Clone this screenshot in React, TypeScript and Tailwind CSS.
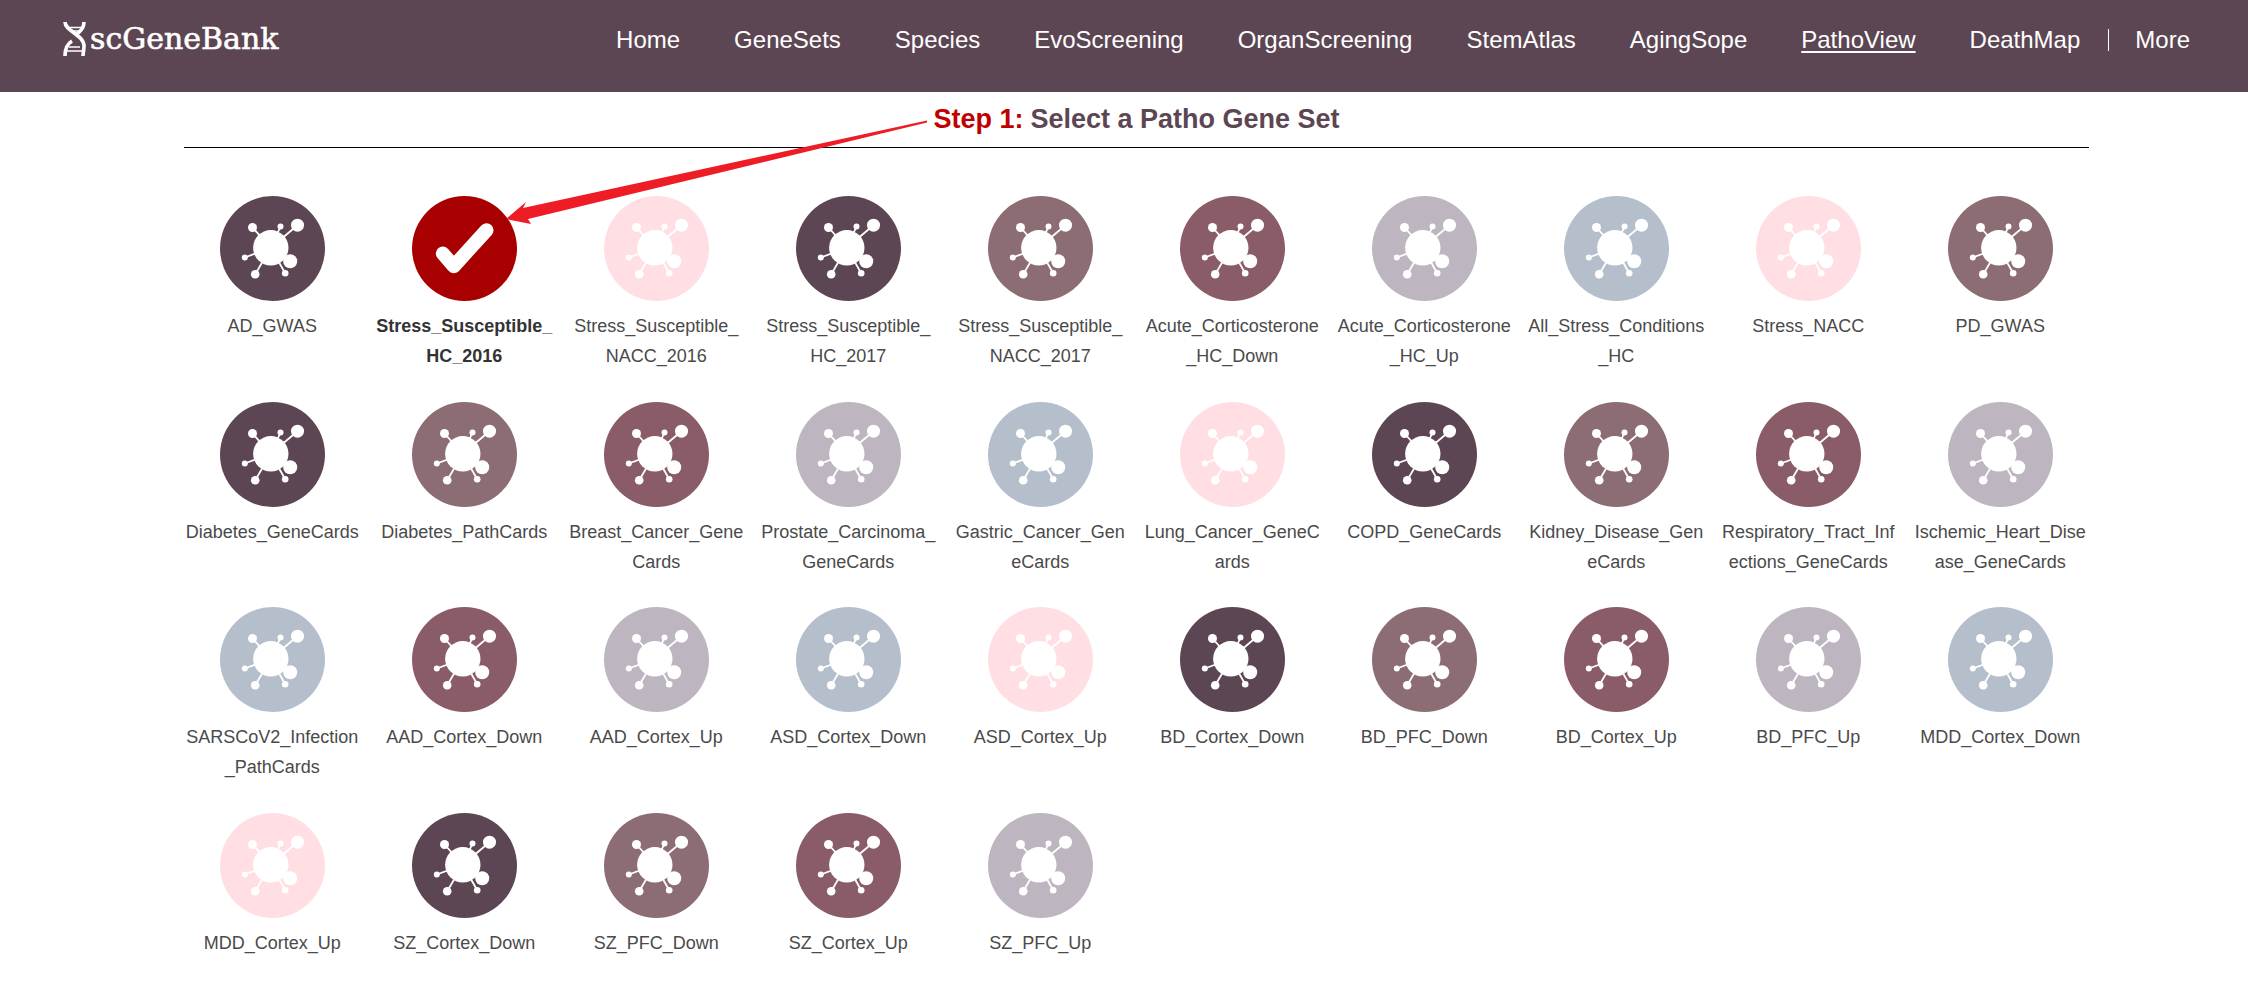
const navLinks = ["Home", "GeneSets", "Species", "EvoScreening", "OrganScreening", "StemAtlas", "AgingSope", "PathoView", "DeathMap"];

const dark = "bg-[#5d4653]";
const mauve = "bg-[#8c6d74]";
const rose = "bg-[#895c67]";
const grey = "bg-[#bdb6c0]";
const blue = "bg-[#b5bfcb]";
const pink = "bg-[#ffdfe3]";

const geneSets = [
  { name: "AD_GWAS", color: dark },
  { name: "Stress_Susceptible_HC_2016", color: "bg-[#a80000]", selected: true },
  { name: "Stress_Susceptible_NACC_2016", color: pink },
  { name: "Stress_Susceptible_HC_2017", color: dark },
  { name: "Stress_Susceptible_NACC_2017", color: mauve },
  { name: "Acute_Corticosterone_HC_Down", color: rose },
  { name: "Acute_Corticosterone_HC_Up", color: grey },
  { name: "All_Stress_Conditions_HC", color: blue },
  { name: "Stress_NACC", color: pink },
  { name: "PD_GWAS", color: mauve },
  { name: "Diabetes_GeneCards", color: dark },
  { name: "Diabetes_PathCards", color: mauve },
  { name: "Breast_Cancer_GeneCards", color: rose },
  { name: "Prostate_Carcinoma_GeneCards", color: grey },
  { name: "Gastric_Cancer_GeneCards", color: blue },
  { name: "Lung_Cancer_GeneCards", color: pink },
  { name: "COPD_GeneCards", color: dark },
  { name: "Kidney_Disease_GeneCards", color: mauve },
  { name: "Respiratory_Tract_Infections_GeneCards", color: rose },
  { name: "Ischemic_Heart_Disease_GeneCards", color: grey },
  { name: "SARSCoV2_Infection_PathCards", color: blue },
  { name: "AAD_Cortex_Down", color: rose },
  { name: "AAD_Cortex_Up", color: grey },
  { name: "ASD_Cortex_Down", color: blue },
  { name: "ASD_Cortex_Up", color: pink },
  { name: "BD_Cortex_Down", color: dark },
  { name: "BD_PFC_Down", color: mauve },
  { name: "BD_Cortex_Up", color: rose },
  { name: "BD_PFC_Up", color: grey },
  { name: "MDD_Cortex_Down", color: blue },
  { name: "MDD_Cortex_Up", color: pink },
  { name: "SZ_Cortex_Down", color: dark },
  { name: "SZ_PFC_Down", color: mauve },
  { name: "SZ_Cortex_Up", color: rose },
  { name: "SZ_PFC_Up", color: grey },
];

// spikes: end point + radius, relative to the circle centre
const spikes = [
  [-20, -21, 4.5],
  [8, -22, 3],
  [25, -23.3, 6.5],
  [17.7, 12.7, 7],
  [12.7, 24.7, 3.3],
  [-17.3, 25.7, 4.3],
  [-27.7, 9, 3],
];

function VirusIcon() {
  return (
    <svg viewBox="-52.5 -52.5 105 105" className="w-[105px] h-[105px]">
      <circle cx={-1.7} cy={-0.7} r={17.7} fill="#fff" />
      {spikes.map(([x, y, r]) => (
        <g key={`${x}-${y}`}>
          <line x1={-1.7} y1={-0.7} x2={x} y2={y} stroke="#fff" strokeWidth={1.8} />
          <circle cx={x} cy={y} r={r} fill="#fff" />
        </g>
      ))}
    </svg>
  );
}

function CheckIcon() {
  return (
    <svg viewBox="-52.5 -52.5 105 105" className="w-[105px] h-[105px]">
      <polyline points="-21.7,5 -10.7,17.7 22,-18.3" fill="none" stroke="#fff" strokeWidth={14} strokeLinecap="round" strokeLinejoin="round" />
    </svg>
  );
}

function DnaLogo() {
  return (
    <svg viewBox="0 0 23 34" className="w-[23px] h-[34px]">
      <path d="M2 0 C2 9 21 13 21 24 C21 28 20 31 20 34" fill="none" stroke="#fff" strokeWidth={3.6} />
      <path d="M21 0 C21 5 18 9 14 12" fill="none" stroke="#fff" strokeWidth={3.6} />
      <path d="M9 19 C4 22 2 27 2 34" fill="none" stroke="#fff" strokeWidth={3.6} />
      <path d="M6 5.5 H19 M9 9 H17 M6 25 H17 M4 29 H19" fill="none" stroke="#fff" strokeWidth={1.4} />
    </svg>
  );
}

export default function App() {
  return (
    <div className="relative min-h-[985px] bg-white font-['Liberation_Sans',Arial,sans-serif]">
      <header className="h-[92px] bg-[#5d4653] flex items-center justify-between pl-[63px] pr-[58px] text-white">
        <div className="flex items-center gap-[4px] -mt-[14px]">
          <DnaLogo />
          <span className="font-['DejaVu_Serif',serif] text-[30px] leading-none [-webkit-text-stroke:0.6px_white]">scGeneBank</span>
        </div>
        <nav className="flex items-center gap-[54px] text-[24px] -mt-[13px]">
          {navLinks.slice(0, 8).map((link) => (
            <a key={link} className={link === "PathoView" ? "underline underline-offset-[3px]" : ""}>
              {link}
            </a>
          ))}
          <div className="flex items-center">
            <a>DeathMap</a>
            <span className="w-px h-[22px] bg-white ml-[28px] mr-[26px]" />
            <a>More</a>
          </div>
        </nav>
      </header>

      <main className="ml-[184px] w-[1905px]">
        <div className="h-[56px] border-b border-black flex items-center justify-center text-[27px] font-bold text-[#5d4653]">
          <span className="text-[#c00000] mr-[7px]">Step 1:</span> Select a Patho Gene Set
        </div>

        <div className="grid grid-cols-[repeat(10,176.5px)] gap-x-[15.5px] gap-y-[30.6px] mt-[48px]">
          {geneSets.map((set) => (
            <div key={set.name} className="flex flex-col items-center">
              <div className={`w-[105px] h-[105px] rounded-full ${set.color}`}>
                {set.selected ? <CheckIcon /> : <VirusIcon />}
              </div>
              <p className={`mt-[10px] w-full h-[60px] text-center text-[18px] leading-[30px] break-all ${set.selected ? "font-bold text-[#333]" : "text-[#4a4a4a]"}`}>
                {set.name}
              </p>
            </div>
          ))}
        </div>
      </main>

      <svg className="absolute left-[500px] top-[115px] w-[430px] h-[115px] pointer-events-none" viewBox="500 115 430 115">
        <polygon points="506,219 526,202 523,208 927,120.5 927,122.5 528,219 531,224" fill="#ee1c25" />
      </svg>
    </div>
  );
}
